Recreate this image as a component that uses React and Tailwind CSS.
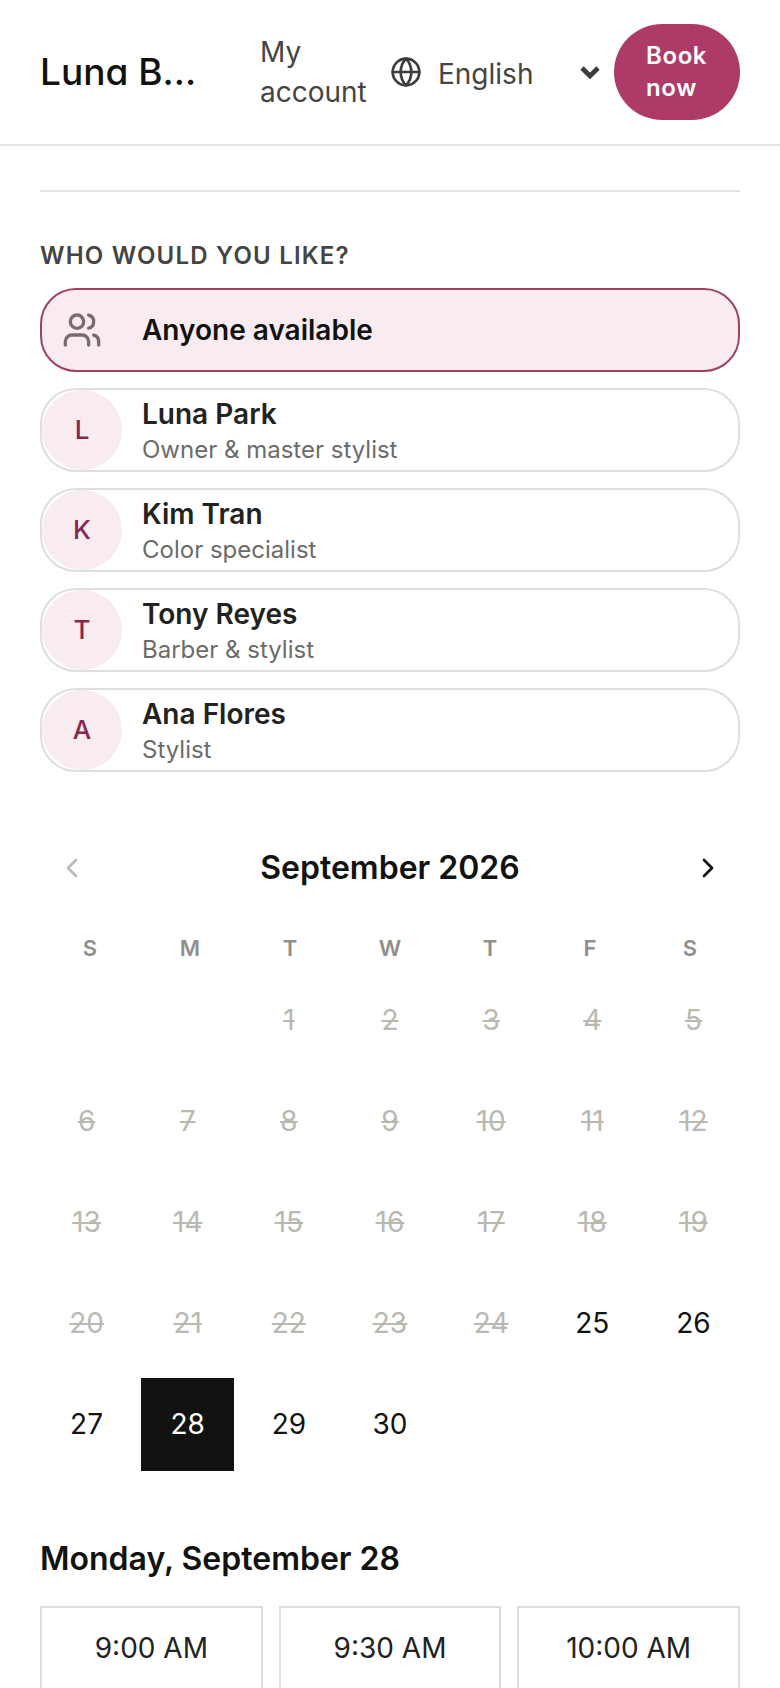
import React, { useState } from "react";
import { ChevronDown, ChevronLeft, ChevronRight, Globe, Users } from "lucide-react";

const staff = [
  { name: "Luna Park", role: "Owner & master stylist" },
  { name: "Kim Tran", role: "Color specialist" },
  { name: "Tony Reyes", role: "Barber & stylist" },
  { name: "Ana Flores", role: "Stylist" },
];

const weekdays = ["S", "M", "T", "W", "T", "F", "S"];
const days = Array.from({ length: 30 }, (_, i) => i + 1);
const firstOpenDay = 25;
const times = ["9:00 AM", "9:30 AM", "10:00 AM"];

const Header = () => (
  <header className="flex shrink-0 items-center justify-between border-b-2 border-[#e5e5e5] bg-white px-10 py-6">
    <a href="#" className="whitespace-nowrap text-[37px] leading-[48px] font-medium text-[#121211] [font-feature-settings:'cv11']">
      Luna B...
    </a>
    <div className="flex items-center">
      <a href="#account" className="w-[106px] text-[28px] leading-10 text-[#444442]">
        My account
      </a>
      <div className="relative ml-6 flex items-center text-[#3c3c3a]">
        <Globe size={32} strokeWidth={2} />
        <select
          aria-label="Language"
          defaultValue="en"
          className="ml-4 w-[168px] appearance-none bg-transparent pt-1 text-[28px] leading-10 text-[#444442]"
        >
          <option value="en">English</option>
          <option value="es">Español</option>
        </select>
        <ChevronDown size={32} strokeWidth={3.5} strokeLinecap="butt" strokeLinejoin="miter" className="pointer-events-none absolute right-0" />
      </div>
      <button className="ml-2 w-[126px] rounded-full bg-[#ae3a68] px-8 py-4 text-left text-2xl leading-8 font-semibold tracking-wide text-white">
        Book now
      </button>
    </div>
  </header>
);

const StaffPicker = ({ selected, onSelect }) => (
  <section>
    <h2 className="text-2xl leading-8 font-semibold tracking-wider text-[#444442] uppercase">Who would you like?</h2>
    <div className="mt-4 flex flex-col gap-4">
      <button
        onClick={() => onSelect(null)}
        className={`flex items-center gap-5 rounded-[36px] border-2 text-left ${selected === null ? "border-[#9f4165] bg-[#f8ecf1]" : "border-[#dededd] bg-white"}`}
      >
        <span className="flex size-20 items-center justify-center text-[#7b6a70]">
          <Users size={40} strokeWidth={2} />
        </span>
        <span className="text-[28px] leading-10 font-semibold text-[#121211]">Anyone available</span>
      </button>
      {staff.map((person) => (
        <button
          key={person.name}
          onClick={() => onSelect(person.name)}
          className={`flex items-center gap-5 rounded-[36px] border-2 text-left ${selected === person.name ? "border-[#9f4165] bg-[#f8ecf1]" : "border-[#dededd] bg-white"}`}
        >
          <span className="flex size-20 items-center justify-center rounded-full bg-[#f8ecf1] text-[26px] leading-10 font-medium text-[#85284f]">
            {person.name[0]}
          </span>
          <span className="flex flex-col">
            <span className="text-[28px] leading-10 font-semibold text-[#222221]">{person.name}</span>
            <span className="text-2xl leading-8 text-[#6b6b69]">{person.role}</span>
          </span>
        </button>
      ))}
    </div>
  </section>
);

const Calendar = ({ selectedDay, onSelect }) => (
  <section className="mt-16">
    <div className="flex items-center justify-between">
      <button aria-label="Previous month" disabled className="flex size-16 items-center justify-center text-[#b9b9b7]">
        <ChevronLeft size={32} />
      </button>
      <h2 className="text-[32px] leading-10 font-semibold text-[#121211]">September 2026</h2>
      <button aria-label="Next month" className="flex size-16 items-center justify-center text-[#121211]">
        <ChevronRight size={32} />
      </button>
    </div>
    <div className="mt-8 grid grid-cols-7 text-center text-[22px] leading-8 font-semibold text-[#8f8f8c]">
      {weekdays.map((d, i) => (
        <span key={i}>{d}</span>
      ))}
    </div>
    <div className="mt-[9px] grid grid-cols-7 gap-2 text-[28px] leading-10">
      {days.map((day) => (
        <button
          key={day}
          disabled={day < firstOpenDay}
          onClick={() => onSelect(day)}
          className={`aspect-square ${day === 1 ? "col-start-3" : ""} ${
            day < firstOpenDay ? "text-[#b9b9b1] line-through" : day === selectedDay ? "bg-[#121210] text-white" : "text-[#121211]"
          }`}
        >
          {day}
        </button>
      ))}
    </div>
  </section>
);

export default function App() {
  const [stylist, setStylist] = useState(null);
  const [day, setDay] = useState(28);
  const weekday = new Date(2026, 8, day).toLocaleDateString("en-US", { weekday: "long" });

  return (
    <div className="flex h-screen flex-col bg-white font-['Inter',sans-serif]">
      <Header />
      <main className="min-h-0 flex-1 overflow-y-auto px-10 pt-11 [scrollbar-width:none]">
        <hr className="mb-12 border-t-2 border-[#e5e5e5]" />
        <StaffPicker selected={stylist} onSelect={setStylist} />
        <Calendar selectedDay={day} onSelect={setDay} />
        <section className="mt-17">
          <h2 className="text-[32px] leading-10 font-semibold text-[#121211]">
            {weekday}, September {day}
          </h2>
          <div className="mt-[27px] grid grid-cols-3 gap-4">
            {times.map((time) => (
              <button key={time} className="border-2 border-[#dededd] py-5 text-[28px] leading-10 text-[#222221]">
                {time}
              </button>
            ))}
          </div>
        </section>
      </main>
    </div>
  );
}
